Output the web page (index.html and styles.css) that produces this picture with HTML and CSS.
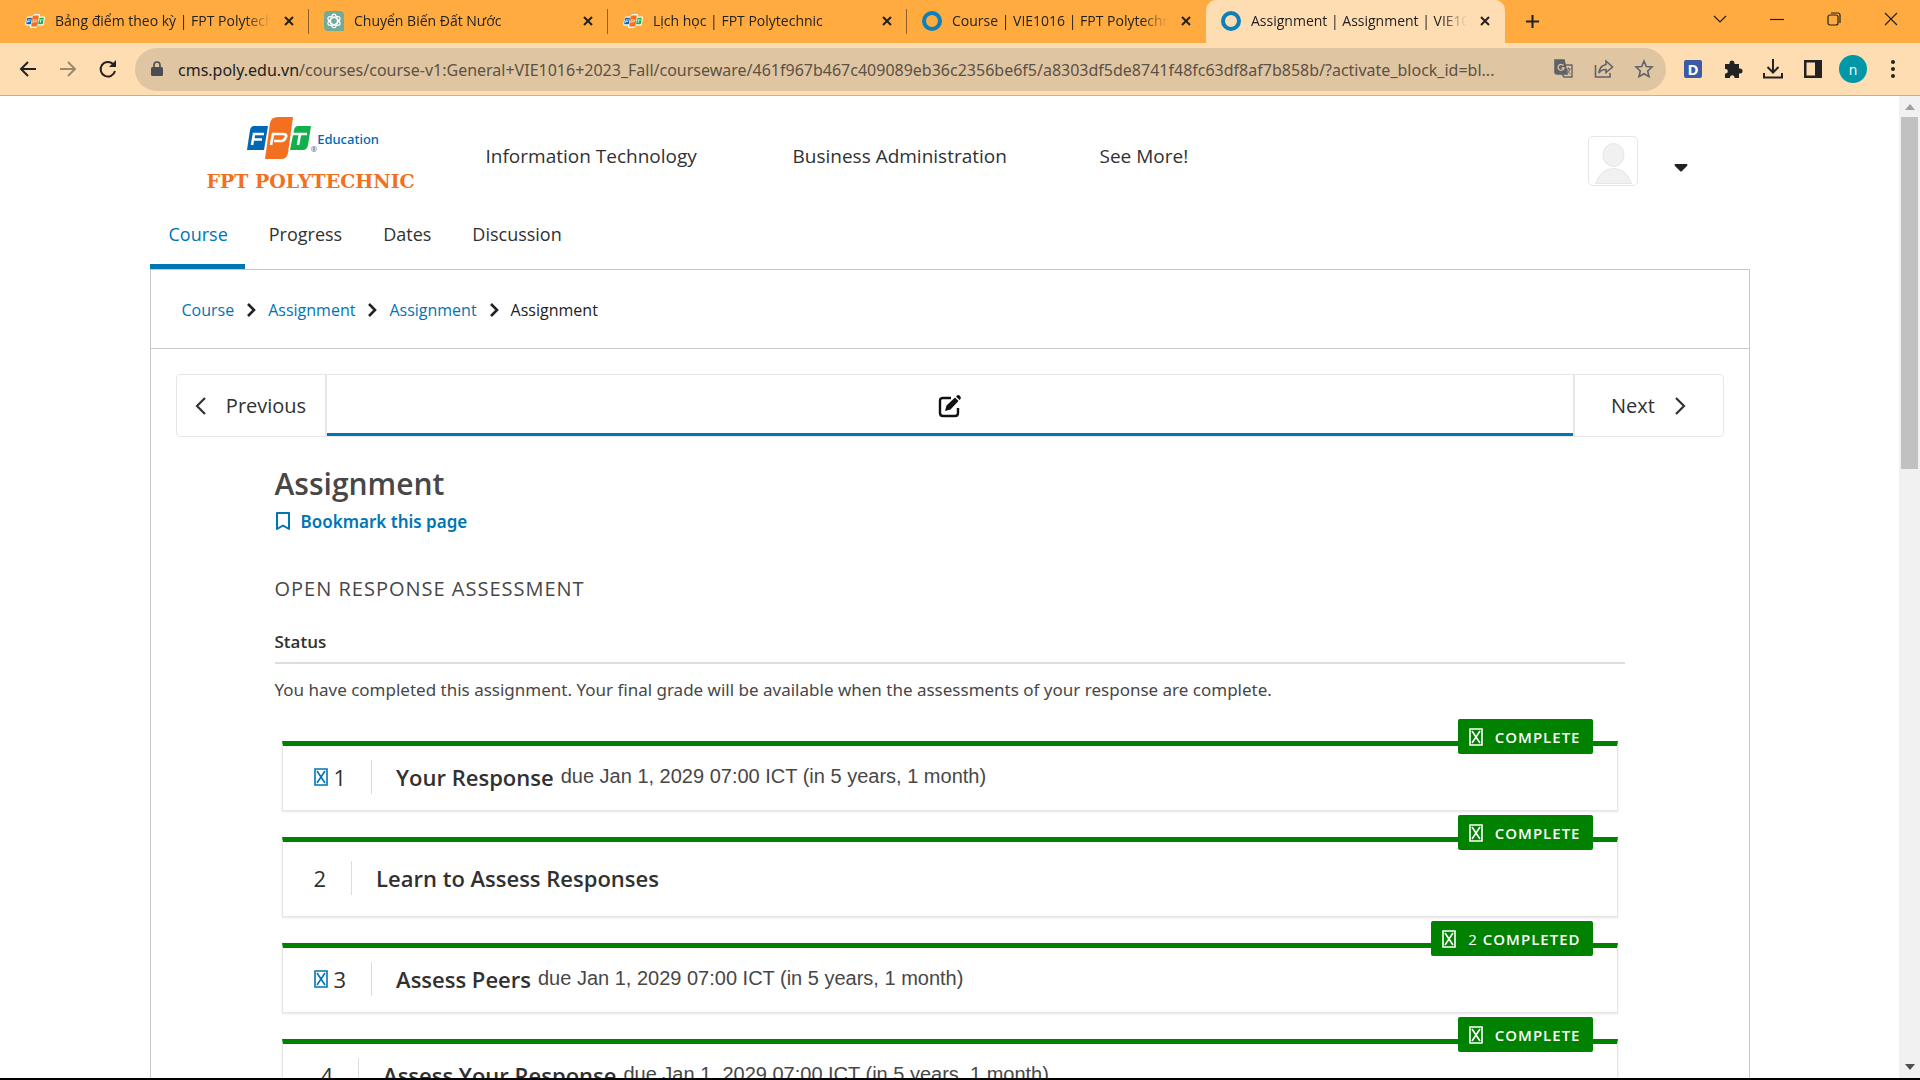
FILE: index.html
```html
<!DOCTYPE html>
<html lang="vi">
<head>
<meta charset="utf-8">
<title>Assignment | Assignment | VIE1016</title>
<link rel="stylesheet" href="styles.css">
</head>
<body>
<svg class="defs" aria-hidden="true">
  <symbol id="fpt" viewBox="0 0 64 42">
    <path fill="#0067b4" d="M7 9H21L17 33H0L3 13Q4 9 7 9Z"/>
    <path fill="#f37021" d="M31 0H46L41 36Q40 42 34 42H18L23 6Q24 0 31 0Z"/>
    <path fill="#12b04b" d="M51 9H64L61 28Q60 33 56 33H43L47 13Q48 9 51 9Z"/>
    <path fill="none" stroke="#fff" stroke-width="2.6" d="M5 28L7 17H17M6 22.500H15M24 28L26 17H36Q40 17 39 20T35 24H27M46 17H60M53 17L51 28"/>
  </symbol>
  <symbol id="fpt-small" viewBox="-4 -4 72 50">
    <path fill="#fff" stroke="#fff" stroke-width="8" stroke-linejoin="round" d="M7 9H22L31 0H46V9H64L60 33H41L34 42H18V33H0Z"/>
    <use href="#fpt" width="64" height="42"/>
  </symbol>
  <symbol id="cross" viewBox="0 0 12 12"><path d="M2 2L10 10M10 2L2 10" fill="none" stroke="currentColor" stroke-width="2"/></symbol>
  <symbol id="ring" viewBox="0 0 20 20"><circle cx="10" cy="10" r="8" fill="none" stroke="#0b80ba" stroke-width="4"/></symbol>
  <symbol id="right" viewBox="0 0 12 18"><path d="M2 1L10 9L2 17" fill="none" stroke="currentColor" stroke-width="2.2"/></symbol>
  <symbol id="chev" viewBox="0 0 10 14"><path d="M2 1L8 7L2 13" fill="none" stroke="currentColor" stroke-width="2.6"/></symbol>
  <symbol id="box" viewBox="0 0 14 18"><path d="M1 1H13V17H1ZM3 3L11 15M11 3L3 15" fill="none" stroke="currentColor" stroke-width="1.6"/></symbol>
</svg>
<header class="browser">
  <div class="tabstrip">
    <div class="tab"><svg class="fav"><use href="#fpt-small"/></svg><span class="tab-title">Bảng điểm theo kỳ | FPT Polytechnic</span><button class="x" aria-label="Close tab"><svg><use href="#cross"/></svg></button></div>
    <div class="tab"><svg class="fav" viewBox="0 0 20 20"><path d="M4 0H16Q20 0 20 4V20H4Q0 20 0 16V4Q0 0 4 0Z" fill="#74aa9c"/><g fill="none" stroke="#fff" stroke-width="1.2"><ellipse cx="10" cy="10" rx="3.4" ry="6.8"/><ellipse cx="10" cy="10" rx="3.4" ry="6.8" transform="rotate(60 10 10)"/><ellipse cx="10" cy="10" rx="3.4" ry="6.8" transform="rotate(120 10 10)"/></g></svg><span class="tab-title">Chuyển Biến Đất Nước</span><button class="x" aria-label="Close tab"><svg><use href="#cross"/></svg></button></div>
    <div class="tab"><svg class="fav"><use href="#fpt-small"/></svg><span class="tab-title">Lịch học | FPT Polytechnic</span><button class="x" aria-label="Close tab"><svg><use href="#cross"/></svg></button></div>
    <div class="tab last"><svg class="fav"><use href="#ring"/></svg><span class="tab-title">Course | VIE1016 | FPT Polytechnic</span><button class="x" aria-label="Close tab"><svg><use href="#cross"/></svg></button></div>
    <div class="tab active"><svg class="fav"><use href="#ring"/></svg><span class="tab-title">Assignment | Assignment | VIE1016</span><button class="x" aria-label="Close tab"><svg><use href="#cross"/></svg></button></div>
    <button class="plus" aria-label="New tab"><svg viewBox="0 0 16 16"><path d="M8 1V15M1 8H15" stroke="#222" stroke-width="2.2"/></svg></button>
    <div class="winctl">
      <button aria-label="Search tabs"><svg viewBox="0 0 14 14"><path d="M1 4L7 10L13 4"/></svg></button>
      <button aria-label="Minimize"><svg viewBox="0 0 14 14"><path d="M0 7.5H14"/></svg></button>
      <button aria-label="Restore"><svg viewBox="0 0 14 14"><rect x="1" y="3" width="10" height="10" rx="2"/><path d="M4 1H11Q13 1 13 3V11"/></svg></button>
      <button aria-label="Close"><svg viewBox="0 0 14 14"><path d="M1 1L13 13M13 1L1 13"/></svg></button>
    </div>
  </div>
  <div class="toolbar">
    <button aria-label="Back"><svg viewBox="0 0 20 20"><path d="M18 10H3M10 3L3 10L10 17"/></svg></button>
    <button class="dim" aria-label="Forward"><svg viewBox="0 0 20 20"><path d="M2 10H17M10 3L17 10L10 17"/></svg></button>
    <button aria-label="Reload"><svg viewBox="0 0 20 20"><path d="M17 12A7.3 7.3 0 1 1 15 5L17 7"/><path d="M18 1V8H11Z" fill="#222" stroke="none"/></svg></button>
    <div class="omni">
      <svg class="lock" viewBox="0 0 12 16"><rect y="6" width="12" height="9" rx="1.5" fill="#4a4d51"/><path d="M3 6V4A3 3 0 0 1 9 4V6" fill="none" stroke="#4a4d51" stroke-width="1.6"/></svg>
      <div class="url"><b>cms.poly.edu.vn</b>/courses/course-v1:General+VIE1016+2023_Fall/courseware/461f967b467c409089eb36c2356be6f5/a8303df5de8741f48fc63df8af7b858b/?activate_block_id=bl...</div>
      <button aria-label="Translate"><svg viewBox="0 0 20 20"><path d="M9 6H18V18H10L8 15" fill="none" stroke="#666" stroke-width="1.4"/><path d="M1 1H10L13 15H3Q1 15 1 13Z" fill="#5f6368"/><path d="M9.500 6.500A3 3 0 1 0 10 9H7.500" stroke="#dfc5a1" stroke-width="1.3" fill="none"/><path d="M12 10H17M14.500 8.500V10M16 10Q15 13 12.500 15M13 11Q14 13 16.500 15" stroke="#666" stroke-width="1" fill="none"/></svg></button>
      <button aria-label="Share"><svg viewBox="0 0 20 20"><path d="M1.500 6V18H16V14" /><path d="M12 2L18.500 8L12 13.500V10.500Q7 10.500 5 14Q5.500 7 12 5.500Z"/></svg></button>
      <button aria-label="Bookmark"><svg viewBox="0 0 20 20"><path d="M10 2L12.300 7.500L18 8L13.700 12L15 17.700L10 14.700L5 17.700L6.300 12L2 8L7.700 7.500Z"/></svg></button>
    </div>
    <div class="ext">
      <button class="dict" aria-label="Dictionary">D</button>
      <button aria-label="Extensions"><svg viewBox="0 0 20 20"><path fill="#222" stroke="none" d="M2 5H6.500V4A2.500 2.500 0 0 1 11.500 4V5H16V9.500H17A2.500 2.500 0 0 1 17 14.500H16V19H11.500V18A2.300 2.300 0 0 0 7 18V19H2V14.500H3A2.300 2.300 0 0 0 3 10H2Z"/></svg></button>
      <button aria-label="Downloads"><svg viewBox="0 0 20 20"><path d="M10 0V13M4.500 8L10 13.500L15.500 8M1 14V18.500H19V14"/></svg></button>
      <button aria-label="Side panel"><svg viewBox="0 0 20 20"><path fill="#222" stroke="none" d="M1 1H19V19H1ZM3.500 3.500V16.500H12V3.500Z" fill-rule="evenodd"/></svg></button>
      <button class="me" aria-label="Profile">n</button>
      <button aria-label="Menu"><svg viewBox="0 0 20 20"><g fill="#222" stroke="none"><circle cx="10" cy="3" r="2"/><circle cx="10" cy="10" r="2"/><circle cx="10" cy="17" r="2"/></g></svg></button>
    </div>
  </div>
</header>
<div class="view">
  <div class="page">
    <div class="site-head">
      <a class="logo" href="#">
        <span class="logo-top"><svg class="mark"><use href="#fpt"/></svg><small>®</small><span class="edu">Education</span></span>
        <span class="poly">FPT POLYTECHNIC</span>
      </a>
      <nav class="main-nav"><a href="#">Information Technology</a><a href="#">Business Administration</a><a href="#">See More!</a></nav>
      <div class="user">
        <a class="avatar" href="#" aria-label="Profile"><svg viewBox="0 0 48 48"><g fill="#f1f1f1" stroke="#e6e6e6"><ellipse cx="24.500" cy="18" rx="10.500" ry="11.500"/><path d="M6.500 46.500Q12 31.500 24.500 31.500T42.500 46.500Z"/></g></svg></a>
        <button class="caret" aria-label="Options"><svg viewBox="0 0 14 8"><path d="M1 0H13Q14 1 13 2L8 7Q7 8 6 7L1 2Q0 1 1 0Z" fill="#222"/></svg></button>
      </div>
    </div>
    <nav class="course-tabs"><a class="on" href="#">Course</a><a href="#">Progress</a><a href="#">Dates</a><a href="#">Discussion</a></nav>
    <main class="panel">
      <nav class="crumbs"><a href="#">Course</a><svg><use href="#chev"/></svg><a href="#">Assignment</a><svg><use href="#chev"/></svg><a href="#">Assignment</a><svg><use href="#chev"/></svg><span>Assignment</span></nav>
      <div class="seq">
        <button class="prev"><svg class="flip"><use href="#right"/></svg>Previous</button>
        <button class="unit" aria-label="Assignment"><svg viewBox="0 0 24 24"><path d="M13 4H5Q2 4 2 7V19Q2 22 5 22H17Q20 22 20 19V14" fill="none" stroke="#111" stroke-width="2.400"/><path fill="#111" d="M7 17L8.500 11.500L17 3.500L20.500 7L12.500 15.500ZM18 2.500L19 1.500Q20.500 .5 22 2T22.500 5L21.500 6Z"/></svg></button>
        <button class="next">Next<svg><use href="#right"/></svg></button>
      </div>
      <div class="content">
        <h1>Assignment</h1>
        <button class="bookmark"><svg viewBox="0 0 16 20"><path d="M2 2H14V18L8 14.500L2 18Z" fill="none" stroke="#0075b4" stroke-width="2" stroke-linejoin="round"/></svg>Bookmark this page</button>
        <h2>OPEN RESPONSE ASSESSMENT</h2>
        <h3>Status</h3>
        <p class="msg">You have completed this assignment. Your final grade will be available when the assessments of your response are complete.</p>
        <ol class="steps">
          <li class="step"><span class="badge"><svg><use href="#box"/></svg>COMPLETE</span><span class="num"><svg><use href="#box"/></svg>1</span><span class="name">Your Response</span><span class="due">due Jan 1, 2029 07:00 ICT (in 5 years, 1 month)</span></li>
          <li class="step tall"><span class="badge"><svg><use href="#box"/></svg>COMPLETE</span><span class="num">2</span><span class="name">Learn to Assess Responses</span></li>
          <li class="step"><span class="badge"><svg><use href="#box"/></svg><span class="count">2</span>COMPLETED</span><span class="num"><svg><use href="#box"/></svg>3</span><span class="name">Assess Peers</span><span class="due">due Jan 1, 2029 07:00 ICT (in 5 years, 1 month)</span></li>
          <li class="step plain"><span class="badge"><svg><use href="#box"/></svg>COMPLETE</span><span class="num">4</span><span class="name">Assess Your Response</span><span class="due">due Jan 1, 2029 07:00 ICT (in 5 years, 1 month)</span></li>
        </ol>
      </div>
    </main>
  </div>
  <div class="scroll"><svg viewBox="0 0 10 6"><path d="M0 6L5 0L10 6Z" fill="#a0a0a0"/></svg><div class="thumb"></div><svg class="down" viewBox="0 0 10 6"><path d="M0 0L5 6L10 0Z" fill="#505050"/></svg></div>
</div>
</body>
</html>
```
FILE: styles.css
```css
* { box-sizing: border-box; }
body { margin: 0; height: 100vh; display: flex; flex-direction: column; overflow: hidden; border-bottom: 2px solid #000; background: #fff; color: #313131; font-family: "Open Sans", "Noto Sans", sans-serif; }
a { color: inherit; text-decoration: none; }
button { border: 0; padding: 0; background: none; font: inherit; color: inherit; }
.defs { position: absolute; width: 0; height: 0; }

/* Browser frame */
.browser { flex: none; color: #222; }
.tabstrip { display: flex; height: 43px; padding-left: 10px; background: #ffab40; }
.tab { display: flex; align-items: center; width: 299px; padding: 0 12px 2px 15px; position: relative; font-size: 14px; }
.tab::after { content: ""; position: absolute; right: 0; top: 9px; width: 1px; height: 25px; background: #8f6226; }
.tab.last::after, .tab.active::after { display: none; }
.tab.active { background: #ffddb3; border-radius: 10px 10px 0 0; }
.fav { flex: none; width: 20px; height: 20px; margin-right: 10px; }
.tab-title { flex: 1; white-space: nowrap; overflow: hidden; -webkit-mask-image: linear-gradient(90deg, #000 88%, transparent); mask-image: linear-gradient(90deg, #000 88%, transparent); }
.x { display: flex; justify-content: center; width: 16px; margin-left: 10px; }
.x svg { width: 12px; height: 12px; }
.plus { width: 54px; }
.plus svg { width: 15px; height: 15px; display: block; margin: auto; }
.winctl { display: flex; margin-left: auto; padding-right: 1px; }
.winctl button { width: 57px; padding-bottom: 6px; }
.winctl svg { display: block; margin: auto; width: 14px; height: 14px; fill: none; stroke: #222; stroke-width: 1.2; }
.toolbar { display: flex; align-items: center; height: 53px; padding: 0 7px 0 8px; background: #ffddb3; border-bottom: 1px solid #cbb08f; }
.toolbar > button { width: 40px; }
.toolbar svg { display: block; margin: auto; width: 20px; height: 20px; fill: none; stroke: #222; stroke-width: 2; }
.toolbar .dim { opacity: .45; }
.omni { flex: 1; min-width: 0; display: flex; align-items: center; height: 43px; margin-left: 7px; padding: 0 2px 0 16px; border-radius: 22px; background: #dfc5a1; }
.omni .lock { flex: none; width: 12px; height: 16px; margin: 0 15px 0 0; stroke: none; }
.url { flex: 1; padding-top: 1px; font-family: "Noto Sans", sans-serif; font-size: 16px; white-space: nowrap; overflow: hidden; color: #5c5145; }
.url b { font-weight: 400; color: #222; }
.omni button { width: 40px; }
.omni button svg { stroke: #5f6368; stroke-width: 1.600; }
.ext { display: flex; align-items: center; padding-left: 7px; }
.ext button { width: 40px; }
.ext .dict { width: 18px; height: 18px; margin: 0 11px; background: #3b5ba5; color: #fff; font-size: 15px; line-height: 18px; font-weight: 700; border-radius: 2px; }
.ext .me { width: 28px; height: 28px; margin: 0 6px; border-radius: 50%; background: #0097a7; color: #fff; font-size: 14px; }

/* Page */
.view { flex: 1; min-height: 0; display: flex; }
.page { flex: 1; overflow: hidden; }
.page > * { max-width: 1600px; margin: 0 auto; }
.scroll { width: 21px; padding: 8px 2px; background: #f1f1f1; display: flex; flex-direction: column; align-items: center; }
.scroll svg { width: 10px; height: 6px; flex: none; }
.thumb { width: 17px; height: 352px; margin-top: 7px; background: #c1c1c1; }
.scroll .down { margin-top: auto; }
.site-head { display: flex; align-items: flex-start; height: 104px; padding: 20px 62px 0 57px; }
.logo { width: 211px; padding-top: 1px; display: flex; flex-direction: column; }
.logo-top { display: flex; align-items: flex-start; height: 46px; padding-left: 40px; }
.mark { width: 64px; height: 42px; }
.logo small { font-size: 8px; line-height: 16px; padding-top: 24px; color: #0067b4; }
.edu { font-family: "Noto Sans", sans-serif; font-size: 13px; line-height: 20px; font-weight: 500; color: #0067b4; padding-top: 12px; }
.poly { font-family: "DejaVu Serif", serif; font-weight: 700; font-size: 19px; line-height: 36px; color: #f37021; white-space: nowrap; }
.main-nav { display: flex; margin-left: 68px; font-size: 19px; line-height: 40px; padding-top: 20px; }
.main-nav a { width: 307px; }
.user { display: flex; margin-left: auto; padding-top: 20px; gap: 36px; align-items: center; }
.avatar { width: 50px; height: 50px; border: 1px solid #e7e7e7; border-radius: 5px; display: block; }
.avatar svg { width: 48px; height: 48px; display: block; }
.caret svg { width: 14px; height: 8px; display: block; margin-top: 14px; }
.course-tabs { display: flex; gap: 5px; font-size: 18px; }
.course-tabs a { padding: 20px 17px 15px 19px; line-height: 29px; border-bottom: 5px solid transparent; }
.course-tabs .on { color: #0075b4; border-color: #0075b4; }
.panel { border: 1px solid #c8c8c8; border-bottom: 0; }
.crumbs { display: flex; align-items: center; gap: 12px; height: 79px; padding: 1px 0 0 31px; border-bottom: 1px solid #c8c8c8; font-size: 16px; color: #222; }
.crumbs a { color: #0075b4; }
.crumbs svg { width: 10px; height: 14px; }
.seq { display: flex; height: 63px; margin: 25px 25px 0; border: 1px solid #e7e7e7; border-radius: 4px; font-size: 20px; }
.seq button { display: flex; align-items: center; justify-content: center; gap: 19px; width: 148px; }
.seq svg { width: 12px; height: 18px; }
.seq .flip { transform: scaleX(-1); }
.seq .unit { flex: 1; border: solid #e7e7e7; border-width: 0 2px; position: relative; }
.seq .unit::after { content: ""; position: absolute; left: 0; right: 0; bottom: 0; height: 3px; background: #0075b4; }
.seq .unit svg { width: 24px; height: 24px; }
.content { padding: 29px 124px 0; }
h1 { margin: 0; font-size: 30px; line-height: 36px; font-weight: 600; color: #474747; }
.bookmark { display: flex; align-items: center; gap: 10px; height: 38px; color: #0075b4; font-family: "Noto Sans", sans-serif; font-size: 17px; font-weight: 600; }
.bookmark svg { width: 16px; height: 20px; }
h2 { margin: 33px 0 0; font-size: 20px; line-height: 32px; font-weight: 400; letter-spacing: 1px; color: #474747; }
h3 { margin: 25px 0 0; font-size: 17px; line-height: 24px; font-weight: 600; padding-bottom: 8px; border-bottom: 2px solid #ddd; }
.msg { margin: 12px 0 0; font-family: "Noto Sans", sans-serif; font-size: 17px; line-height: 28px; color: #474747; }
.steps { list-style: none; margin: 37px 7px 0; padding: 0; display: flex; flex-direction: column; gap: 26px; }
.step { position: relative; display: flex; align-items: center; height: 70px; padding: 0 0 3px 31px; border: 1px solid #e5e5e5; border-top: 5px solid #008100; box-shadow: 0 1px 2px #e5e5e5; font-size: 22px; }
.step.tall { height: 80px; }
.num { display: flex; align-items: center; gap: 6px; height: 34px; padding-right: 25px; margin-right: 24px; border-right: 1px solid #ddd; }
.num svg { width: 14px; height: 18px; color: #0075b4; }
.step.plain { padding-left: 38px; }
.name { font-weight: 600; }
.due { font-family: "Liberation Sans", Arial, sans-serif; font-size: 20px; margin-left: 7px; color: #474747; }
.badge { position: absolute; right: 24px; top: -27px; display: flex; align-items: center; height: 35px; padding: 0 12px 0 11px; background: #008100; color: #fff; border-radius: 2px; font-size: 15px; font-weight: 600; letter-spacing: 1px; }
.badge svg { width: 14px; height: 18px; margin-right: 12px; }
.count { font-weight: 400; margin-right: 5px; }
```
